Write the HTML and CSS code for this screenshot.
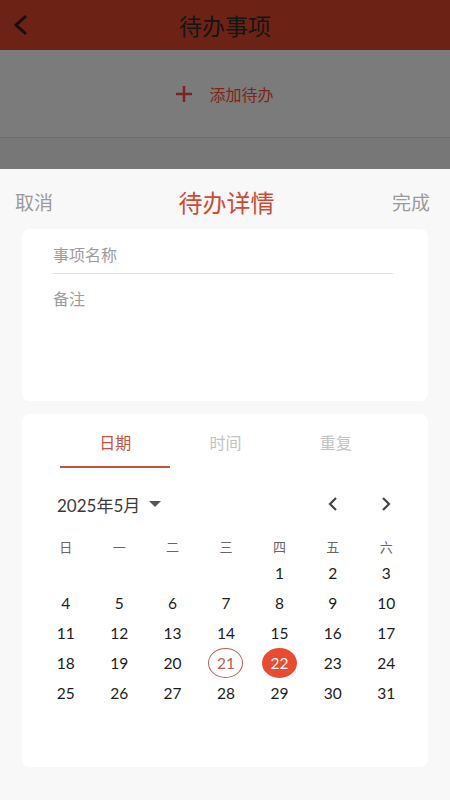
FILE: index.html
```html
<!DOCTYPE html>
<html>

<head>
    <title>待办事项</title>
    <link rel="stylesheet" href="styles.css">
</head>

<body>
<header class="topbar">
    <svg class="back" width="16" height="22" viewBox="0 0 16 22"><path d="M13 2 L3 11 L13 20" fill="none" stroke="#111" stroke-width="3"/></svg>
    <h1>待办事项</h1>
</header>

<div class="overlay">
    <div class="add-row">
        <svg class="plus" width="16" height="16" viewBox="0 0 16 16"><path d="M8 0 V16 M0 8 H16" stroke="#7c2516" stroke-width="2.4"/></svg>
        添加待办
    </div>
    <div class="overlay-strip"></div>
</div>

<div class="sheet">
    <div class="sheet-head">
        <span class="link">取消</span>
        <span class="sheet-title">待办详情</span>
        <span class="link">完成</span>
    </div>

    <div class="card form-card">
        <div class="field field-name">事项名称</div>
        <div class="field">备注</div>
    </div>

    <div class="card cal-card">
        <ul class="tabs">
            <li class="active">日期</li>
            <li>时间</li>
            <li>重复</li>
        </ul>

        <div class="month-row">
            <span class="month">2025年5月 <svg width="12" height="6" viewBox="0 0 12 6"><path d="M0 0 L12 0 L6 6 Z" fill="#555"/></svg></span>
            <span class="nav"><svg width="10" height="14" viewBox="0 0 10 14"><path d="M8 1 L2 7 L8 13" fill="none" stroke="#444" stroke-width="2.2"/></svg></span>
            <span class="nav"><svg width="10" height="14" viewBox="0 0 10 14"><path d="M2 1 L8 7 L2 13" fill="none" stroke="#444" stroke-width="2.2"/></svg></span>
        </div>

        <div class="days weekdays">
            <span>日</span><span>一</span><span>二</span><span>三</span><span>四</span><span>五</span><span>六</span>
        </div>
        <div class="days dates">
            <span></span><span></span><span></span><span></span><span>1</span><span>2</span><span>3</span>
            <span>4</span><span>5</span><span>6</span><span>7</span><span>8</span><span>9</span><span>10</span>
            <span>11</span><span>12</span><span>13</span><span>14</span><span>15</span><span>16</span><span>17</span>
            <span>18</span><span>19</span><span>20</span><span><b class="today">21</b></span><span><b class="picked">22</b></span><span>23</span><span>24</span>
            <span>25</span><span>26</span><span>27</span><span>28</span><span>29</span><span>30</span><span>31</span>
        </div>
    </div>
</div>
</body>
</html>
```

FILE: styles.css
```css
* {
    box-sizing: border-box;
}
body, html {
    padding: 0;
    margin: 0;
}
body {
    width: 450px;
    height: 800px;
    overflow: hidden;
    background-color: #f8f8f8;
    font-family: Lato, "Noto Sans CJK SC", sans-serif;
}
.topbar {
    height: 50px;
    background-color: #6c2316;
    display: flex;
    align-items: center;
    justify-content: center;
    position: relative;
}
.topbar .back {
    position: absolute;
    left: 13px;
    top: 14px;
}
.topbar h1 {
    margin: 0;
    font-size: 23px;
    font-weight: 400;
    color: #151515;
    font-family: "Noto Sans CJK SC", sans-serif;
}
.overlay {
    background-color: #7b7b7b;
}
.add-row {
    height: 88px;
    display: flex;
    align-items: center;
    justify-content: center;
    color: #7c2516;
    font-size: 16px;
    font-family: "Noto Sans CJK SC", sans-serif;
    border-bottom: 1px solid #6c6c6c;
}
.add-row .plus {
    margin-right: 17px;
}
.overlay-strip {
    height: 31px;
    background-color: #777;
}
.sheet-head {
    display: flex;
    justify-content: space-between;
    align-items: center;
    padding: 18px 20px 14px 15px;
    height: 60px;
}
.sheet-head .link {
    font-size: 19px;
    color: #9a9a9a;
    font-family: "Noto Sans CJK SC", sans-serif;
}
.sheet-title {
    font-size: 24px;
    color: #cf4a33;
    font-family: "Noto Sans CJK SC", sans-serif;
    font-weight: 400;
    margin-left: 8px;
}
.card {
    background-color: #fff;
    border-radius: 8px;
    margin: 0 22px 0 22px;
}
.form-card {
    height: 172px;
    padding: 13px 35px 0 31px;
}
.field {
    font-size: 16px;
    line-height: 24px;
    color: #9c9c9c;
    padding-top: 12px;
    font-family: "Noto Sans CJK SC", sans-serif;
}
.field-name {
    padding-top: 0;
    padding-bottom: 7px;
    border-bottom: 1px solid #dcdcdc;
}
.cal-card {
    margin-top: 13px;
    height: 353px;
}
.tabs {
    list-style-type: none;
    margin: 0 37px 0 38px;
    padding: 16px 0 0 0;
    display: flex;
}
.tabs li {
    flex: 1;
    text-align: center;
    font-size: 16px;
    line-height: 24px;
    padding-bottom: 12px;
    color: #c2c2c2;
    border-bottom: 2px solid transparent;
    font-family: "Noto Sans CJK SC", sans-serif;
}
.tabs li.active {
    color: #c4523c;
    border-bottom-color: #c4523c;
}
.month-row {
    display: flex;
    align-items: center;
    margin-top: 24px;
    height: 24px;
    padding: 0 15px 0 35px;
}
.month {
    flex: 1;
    font-size: 17px;
    color: #3a3a3a;
    display: flex;
    align-items: center;
    gap: 9px;
}
.nav {
    width: 53.3px;
    display: flex;
    justify-content: center;
}
.days {
    display: grid;
    grid-template-columns: repeat(7, 1fr);
    padding: 0 15px 0 17px;
}
.days span {
    text-align: center;
    display: flex;
    align-items: center;
    justify-content: center;
}
.weekdays {
    margin-top: 18px;
}
.weekdays span {
    height: 24px;
    font-size: 13px;
    color: #666;
    font-family: "Noto Sans CJK SC", sans-serif;
}
.dates span {
    height: 30px;
    font-size: 15.5px;
    color: #1c1c1c;
}
.dates b {
    font-weight: normal;
    width: 35px;
    height: 30px;
    border-radius: 50%;
    display: flex;
    align-items: center;
    justify-content: center;
}
.today {
    border: 1px solid #b9604f;
    color: #b9604f;
}
.picked {
    background-color: #e84a32;
    color: #fff;
}
```
